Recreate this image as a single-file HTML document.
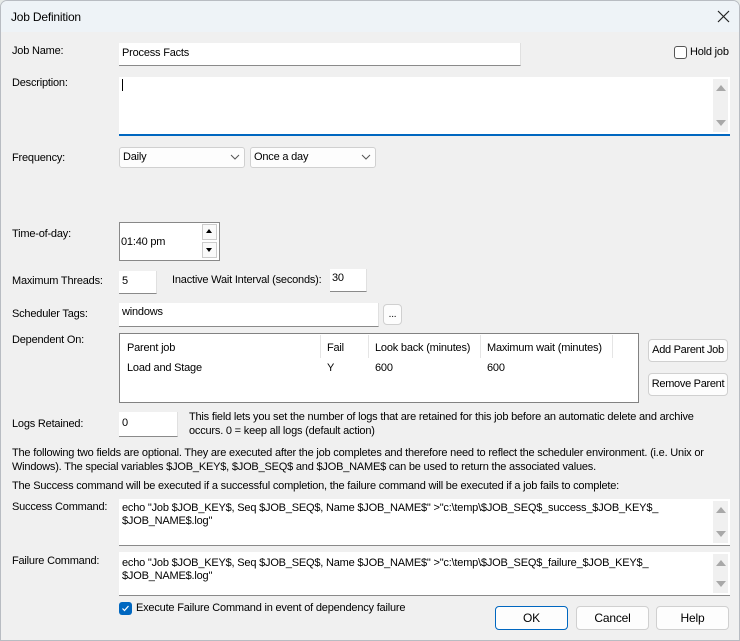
<!DOCTYPE html>
<html><head><style>
*{box-sizing:border-box;margin:0;padding:0}
body{width:740px;height:641px;background:#e6eae8;font-family:"Liberation Sans",sans-serif;font-size:11px;letter-spacing:-0.2px;color:#000;overflow:hidden;position:relative}
.win{position:absolute;left:0;top:0;width:740px;height:641px;background:#f0f0f0;border:1px solid #b8bcc2;border-radius:7px 7px 0 0;overflow:hidden}
.title{position:absolute;left:0;top:0;width:740px;height:31px;background:#eef3f7}
.a{position:absolute;white-space:nowrap}
.in{position:absolute;background:#fff;border-bottom:1px solid #8a8a8a;border-right:1px solid #e0e0e0}
.btn{position:absolute;background:#fdfdfd;border:1px solid #d0d0d0;border-radius:4px;text-align:center;font-size:12px;white-space:nowrap}
.combo{position:absolute;background:#fdfdfd;border:1px solid #d0d0d0;border-radius:3px}
.ta{position:absolute;background:#fff;border-bottom:1px solid #8a8a8a}
.sb{position:absolute;right:2px;top:2px;bottom:2px;width:15px;background:#f0f0f0}
.up,.dn{position:absolute;left:3px;width:0;height:0;border-left:5px solid transparent;border-right:5px solid transparent}
.up{top:6px;border-bottom:6px solid #a8a8a8}
.dn{bottom:6px;border-top:6px solid #a8a8a8}
</style></head><body>
<div class="win">
<div class="title"></div>
<div class="a" style="left:10px;top:9px;font-size:12px">Job Definition</div>
<svg class="a" style="left:716px;top:9px" width="13" height="13"><path d="M1 1L12 12M12 1L1 12" stroke="#222" stroke-width="1.2"/></svg>

<div class="a" style="left:11px;top:44px">Job Name:</div>
<div class="in" style="left:118px;top:42px;width:402px;height:23px"></div>
<div class="a" style="left:121px;top:46px">Process Facts</div>
<div class="a" style="left:673px;top:45px;width:13px;height:13px;border:1px solid #555;border-radius:3px;background:#fff"></div>
<div class="a" style="left:689px;top:45px">Hold job</div>

<div class="a" style="left:11px;top:76px">Description:</div>
<div class="ta" style="left:118px;top:76px;width:611px;height:59px;border-bottom:2px solid #0067c0"><div class="sb"><div class="up"></div><div class="dn"></div></div></div>
<div class="a" style="left:121px;top:78px;width:1px;height:12px;background:#000"></div>

<div class="a" style="left:11px;top:151px">Frequency:</div>
<div class="combo" style="left:118px;top:146px;width:126px;height:21px"></div>
<div class="a" style="left:122px;top:150px">Daily</div>
<svg class="a" style="left:229px;top:153px" width="10" height="6"><path d="M1 1L5 5L9 1" stroke="#555" fill="none"/></svg>
<div class="combo" style="left:249px;top:146px;width:126px;height:21px"></div>
<div class="a" style="left:253px;top:150px">Once a day</div>
<svg class="a" style="left:360px;top:153px" width="10" height="6"><path d="M1 1L5 5L9 1" stroke="#555" fill="none"/></svg>

<div class="a" style="left:11px;top:227px">Time-of-day:</div>
<div class="a" style="left:118px;top:221px;width:101px;height:39px;background:#fff;border:1px solid #888"></div>
<div class="a" style="left:201px;top:223px;width:15px;height:16px;border:1px solid #ccc;background:#fafafa"></div>
<div class="a" style="left:201px;top:241px;width:15px;height:16px;border:1px solid #ccc;background:#fafafa"></div>
<div class="a" style="left:205px;top:228px;border-left:3px solid transparent;border-right:3px solid transparent;border-bottom:4px solid #000"></div>
<div class="a" style="left:205px;top:247px;border-left:3px solid transparent;border-right:3px solid transparent;border-top:4px solid #000"></div>
<div class="a" style="left:120px;top:235px">01:40 pm</div>

<div class="a" style="left:11px;top:274px">Maximum Threads:</div>
<div class="in" style="left:118px;top:270px;width:38px;height:23px"></div>
<div class="a" style="left:121px;top:274px">5</div>
<div class="a" style="left:171px;top:273px">Inactive Wait Interval (seconds):</div>
<div class="in" style="left:329px;top:268px;width:37px;height:23px"></div>
<div class="a" style="left:331px;top:271px">30</div>

<div class="a" style="left:11px;top:307px">Scheduler Tags:</div>
<div class="in" style="left:118px;top:302px;width:260px;height:24px"></div>
<div class="a" style="left:121px;top:305px">windows</div>
<div class="btn" style="left:382px;top:303px;width:19px;height:21px;font-size:10px;line-height:20px">...</div>

<div class="a" style="left:11px;top:333px">Dependent On:</div>
<div class="a" style="left:118px;top:332px;width:520px;height:70px;background:#fff;border:1px solid #828282"></div>
<div class="a" style="left:319px;top:334px;width:1px;height:23px;background:#e5e5e5"></div>
<div class="a" style="left:367px;top:334px;width:1px;height:23px;background:#e5e5e5"></div>
<div class="a" style="left:479px;top:334px;width:1px;height:23px;background:#e5e5e5"></div>
<div class="a" style="left:611px;top:334px;width:1px;height:23px;background:#e5e5e5"></div>
<div class="a" style="left:126px;top:341px">Parent job</div>
<div class="a" style="left:326px;top:341px">Fail</div>
<div class="a" style="left:374px;top:341px">Look back (minutes)</div>
<div class="a" style="left:486px;top:341px">Maximum wait (minutes)</div>
<div class="a" style="left:126px;top:361px">Load and Stage</div>
<div class="a" style="left:326px;top:361px">Y</div>
<div class="a" style="left:374px;top:361px">600</div>
<div class="a" style="left:486px;top:361px">600</div>
<div class="btn" style="left:647px;top:338px;width:80px;height:23px;line-height:21px;font-size:11px;letter-spacing:-0.3px">Add Parent Job</div>
<div class="btn" style="left:647px;top:372px;width:80px;height:23px;line-height:21px;font-size:11px;letter-spacing:-0.3px">Remove Parent</div>

<div class="a" style="left:11px;top:417px">Logs Retained:</div>
<div class="in" style="left:118px;top:411px;width:59px;height:25px"></div>
<div class="a" style="left:121px;top:416px">0</div>
<div class="a" style="left:188px;top:410px">This field lets you set the number of logs that are retained for this job before an automatic delete and archive</div>
<div class="a" style="left:188px;top:424px">occurs. 0 = keep all logs (default action)</div>

<div class="a" style="left:11px;top:446px">The following two fields are optional. They are executed after the job completes and therefore need to reflect the scheduler environment. (i.e. Unix or</div>
<div class="a" style="left:11px;top:460px">Windows). The special variables $JOB_KEY$, $JOB_SEQ$ and $JOB_NAME$ can be used to return the associated values.</div>
<div class="a" style="left:11px;top:479px">The Success command will be executed if a successful completion, the failure command will be executed if a job fails to complete:</div>

<div class="a" style="left:11px;top:500px">Success Command:</div>
<div class="ta" style="left:118px;top:498px;width:611px;height:47px"><div class="sb"><div class="up"></div><div class="dn"></div></div></div>
<div class="a" style="left:121px;top:501px">echo "Job $JOB_KEY$, Seq $JOB_SEQ$, Name $JOB_NAME$" &gt;"c:\temp\$JOB_SEQ$_success_$JOB_KEY$_</div>
<div class="a" style="left:121px;top:514px">$JOB_NAME$.log"</div>

<div class="a" style="left:11px;top:554px">Failure Command:</div>
<div class="ta" style="left:118px;top:551px;width:611px;height:44px"><div class="sb"><div class="up"></div><div class="dn"></div></div></div>
<div class="a" style="left:121px;top:556px">echo "Job $JOB_KEY$, Seq $JOB_SEQ$, Name $JOB_NAME$" &gt;"c:\temp\$JOB_SEQ$_failure_$JOB_KEY$_</div>
<div class="a" style="left:121px;top:569px">$JOB_NAME$.log"</div>

<div class="a" style="left:118px;top:601px;width:13px;height:13px;background:#0067c0;border-radius:3px"></div>
<svg class="a" style="left:119px;top:602px" width="11" height="11"><path d="M2.5 5.5L4.5 7.5L8.5 3" stroke="#fff" fill="none" stroke-width="1.2"/></svg>
<div class="a" style="left:135px;top:601px">Execute Failure Command in event of dependency failure</div>

<div class="btn" style="left:494px;top:605px;width:73px;height:24px;line-height:22px;border:1px solid #0067c0">OK</div>
<div class="btn" style="left:575px;top:605px;width:73px;height:24px;line-height:22px">Cancel</div>
<div class="btn" style="left:655px;top:605px;width:73px;height:24px;line-height:22px">Help</div>
</div>
</body></html>
